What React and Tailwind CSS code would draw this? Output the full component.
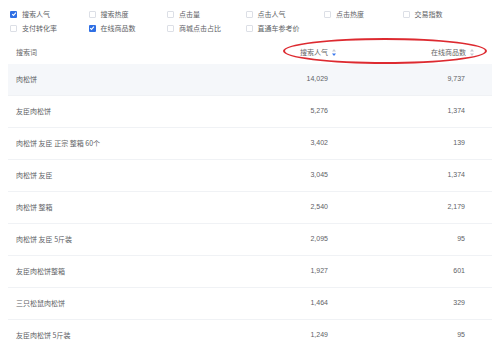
import React from 'react';

const options = [
  { label: '搜索人气', checked: true },
  { label: '搜索热度', checked: false },
  { label: '点击量', checked: false },
  { label: '点击人气', checked: false },
  { label: '点击热度', checked: false },
  { label: '交易指数', checked: false },
  { label: '支付转化率', checked: false },
  { label: '在线商品数', checked: true },
  { label: '商城点击占比', checked: false },
  { label: '直通车参考价', checked: false },
];

const rows = [
  ['肉松饼', '14,029', '9,737'],
  ['友臣肉松饼', '5,276', '1,374'],
  ['肉松饼 友臣 正宗 整箱 60个', '3,402', '139'],
  ['肉松饼 友臣', '3,045', '1,374'],
  ['肉松饼 整箱', '2,540', '2,179'],
  ['肉松饼 友臣 5斤装', '2,095', '95'],
  ['友臣肉松饼整箱', '1,927', '601'],
  ['三只松鼠肉松饼', '1,464', '329'],
  ['友臣肉松饼 5斤装', '1,249', '95'],
];

function Checkbox({ checked }) {
  if (checked) {
    return (
      <span className="w-[7px] h-[7px] rounded-[1px] bg-[#2f6fe4] flex items-center justify-center shrink-0">
        <svg width="6" height="6" viewBox="0 0 10 10">
          <path d="M2 5.2 L4.2 7.3 L8.2 2.8" fill="none" stroke="white" strokeWidth="1.8" />
        </svg>
      </span>
    );
  }
  return <span className="w-[7px] h-[7px] rounded-[1px] border border-[#dcdfe6] bg-white shrink-0" />;
}

function SortIcon({ active }) {
  return (
    <svg width="4" height="7" viewBox="0 0 4 7" className="ml-[4px]">
      <path d="M2 0 L4 2.6 L0 2.6 Z" fill="#c8ccd4" />
      <path d="M2 7 L4 4.4 L0 4.4 Z" fill={active ? '#3a78ee' : '#c8ccd4'} />
    </svg>
  );
}

export default function App() {
  return (
    <div className="w-[500px] h-[345px] overflow-hidden bg-white relative font-['Noto_Sans_CJK_SC','Noto_Sans',sans-serif] text-[7px] text-[#606266]">

      {/* Index options */}
      <div className="grid grid-cols-6 w-[471px] ml-[10px] pt-[7px]">
        {options.map((o, i) => (
          <label key={i} className="h-[14px] flex items-center gap-[5px]">
            <Checkbox checked={o.checked} />
            <span>{o.label}</span>
          </label>
        ))}
      </div>

      {/* Table */}
      <div className="mx-[8px] mt-[5px]">
        <div className="grid grid-cols-[1fr_140px_137px] h-[24px] items-center text-[#666]">
          <div className="pl-[8px]">搜索词</div>
          <div className="flex items-center justify-end pr-[19px]">
            搜索人气
            <SortIcon active />
          </div>
          <div className="flex items-center justify-end pr-[18px]">
            在线商品数
            <SortIcon />
          </div>
        </div>

        {rows.map((r, i) => (
          <div
            key={i}
            className={`grid grid-cols-[1fr_140px_137px] h-[32px] items-center border-b border-[#f0f2f5] ${i === 0 ? 'bg-[#f5f7fa]' : ''}`}
          >
            <div className="pl-[8px]">{r[0]}</div>
            <div className="text-right pr-[27px] font-['Liberation_Sans',sans-serif]">{r[1]}</div>
            <div className="text-right pr-[27px] font-['Liberation_Sans',sans-serif]">{r[2]}</div>
          </div>
        ))}
      </div>

      {/* Red highlight ellipse */}
      <div className="absolute left-[283px] top-[38px] w-[204px] h-[26px] rounded-[50%] border-2 border-[#dd2a30]" />
    </div>
  );
}
